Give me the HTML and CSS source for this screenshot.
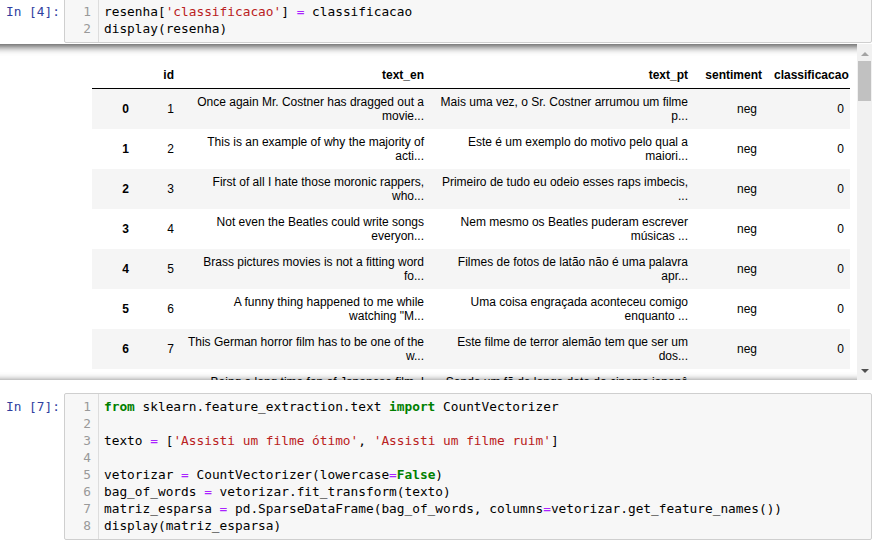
FILE: index.html
```html
<!DOCTYPE html>
<html>
<head>
<meta charset="utf-8">
<link rel="stylesheet" href="styles.css">
</head>
<body>
<div class="cell cell-top">
  <div class="prompt">In&nbsp;[4]:</div>
  <div class="input-area">
    <div class="gutter"><div class="ln">1</div><div class="ln">2</div></div>
    <div class="code">
      <div class="line">resenha[<span class="s">'classificacao'</span>] <span class="o">=</span> classificacao</div>
      <div class="line">display(resenha)</div>
    </div>
  </div>
</div>

<div class="output-scroll">
  <div class="output-content">
    <table class="df">
      <colgroup>
        <col class="c-idx"><col class="c-id"><col class="c-en"><col class="c-pt"><col class="c-sent"><col class="c-cls">
      </colgroup>
      <thead>
        <tr><th></th><th>id</th><th>text_en</th><th>text_pt</th><th>sentiment</th><th>classificacao</th></tr>
      </thead>
      <tbody>
        <tr><th>0</th><td>1</td><td>Once again Mr. Costner has dragged out a<br>movie...</td><td>Mais uma vez, o Sr. Costner arrumou um filme<br>p...</td><td class="sent">neg</td><td>0</td></tr>
        <tr><th>1</th><td>2</td><td>This is an example of why the majority of<br>acti...</td><td>Este é um exemplo do motivo pelo qual a<br>maiori...</td><td class="sent">neg</td><td>0</td></tr>
        <tr><th>2</th><td>3</td><td>First of all I hate those moronic rappers,<br>who...</td><td>Primeiro de tudo eu odeio esses raps imbecis,<br>...</td><td class="sent">neg</td><td>0</td></tr>
        <tr><th>3</th><td>4</td><td>Not even the Beatles could write songs<br>everyon...</td><td>Nem mesmo os Beatles puderam escrever<br>músicas ...</td><td class="sent">neg</td><td>0</td></tr>
        <tr><th>4</th><td>5</td><td>Brass pictures movies is not a fitting word<br>fo...</td><td>Filmes de fotos de latão não é uma palavra<br>apr...</td><td class="sent">neg</td><td>0</td></tr>
        <tr><th>5</th><td>6</td><td>A funny thing happened to me while<br>watching "M...</td><td>Uma coisa engraçada aconteceu comigo<br>enquanto ...</td><td class="sent">neg</td><td>0</td></tr>
        <tr><th>6</th><td>7</td><td>This German horror film has to be one of the<br>w...</td><td>Este filme de terror alemão tem que ser um<br>dos...</td><td class="sent">neg</td><td>0</td></tr>
        <tr><th>7</th><td>8</td><td>Being a long time fan of Japanese film, I<br>...</td><td>Sendo um fã de longa data do cinema japonê<br>s...</td><td class="sent">neg</td><td>0</td></tr>
      </tbody>
    </table>
  </div>
  <div class="scrollbar">
    <div class="sb-btn sb-up"></div>
    <div class="sb-thumb"></div>
    <div class="sb-space"></div>
    <div class="sb-btn sb-down"></div>
  </div>
</div>

<div class="cell cell-bottom">
  <div class="prompt">In&nbsp;[7]:</div>
  <div class="input-area">
    <div class="gutter">
      <div class="ln">1</div><div class="ln">2</div><div class="ln">3</div><div class="ln">4</div>
      <div class="ln">5</div><div class="ln">6</div><div class="ln">7</div><div class="ln">8</div>
    </div>
    <div class="code">
      <div class="line"><span class="k">from</span> sklearn.feature_extraction.text <span class="k">import</span> CountVectorizer</div>
      <div class="line"></div>
      <div class="line">texto <span class="o">=</span> [<span class="s">'Assisti um filme ótimo'</span>, <span class="s">'Assisti um filme ruim'</span>]</div>
      <div class="line"></div>
      <div class="line">vetorizar <span class="o">=</span> CountVectorizer(lowercase<span class="o">=</span><span class="k">False</span>)</div>
      <div class="line">bag_of_words <span class="o">=</span> vetorizar.fit_transform(texto)</div>
      <div class="line">matriz_esparsa <span class="o">=</span> pd.SparseDataFrame(bag_of_words, columns<span class="o">=</span>vetorizar.get_feature_names())</div>
      <div class="line">display(matriz_esparsa)</div>
    </div>
  </div>
</div>
</body>
</html>
```

FILE: styles.css
```css
* {
  box-sizing: border-box;
}

html,
body {
  margin: 0;
  padding: 0;
  background: #ffffff;
}

body {
  width: 877px;
  height: 544px;
  overflow: hidden;
  font-family: "Liberation Sans", Arial, sans-serif;
  color: #000000;
}

/* ---------- code cells ---------- */
.cell {
  display: flex;
  margin-right: 5px;
}

.cell-top {
  margin-top: -2px;
}

.cell-bottom {
  margin-top: 13px;
}

.prompt {
  flex: none;
  width: 64px;
  padding: 5px 0 0 6px;
  font-family: "DejaVu Sans Mono", "Liberation Mono", monospace;
  font-size: 12.8px;
  line-height: 17px;
  color: #303f9f;
  white-space: nowrap;
}

.input-area {
  flex: 1;
  display: flex;
  background: #f7f7f7;
  border: 1px solid #cfcfcf;
  border-radius: 2px;
  font-family: "DejaVu Sans Mono", "Liberation Mono", monospace;
  font-size: 12.8px;
  line-height: 17px;
}

.gutter {
  flex: none;
  width: 34px;
  padding: 4px 7px 5px 0;
  border-right: 1px solid #dddddd;
  text-align: right;
  color: #999999;
}

.ln {
  height: 17px;
}

.code {
  flex: 1;
  padding: 4px 0 5px 5px;
  color: #000000;
}

.line {
  height: 17px;
  white-space: pre;
}

.k {
  color: #008000;
  font-weight: bold;
}

.s {
  color: #ba2121;
}

.o {
  color: #aa22ff;
}

/* ---------- scrolled output ---------- */
.output-scroll {
  display: flex;
  height: 336px;
  margin: 1px 5px 0 -20px;
  border-radius: 2px;
  box-shadow: inset 0 2px 8px rgba(0, 0, 0, 0.8);
}

.output-content {
  flex: 1;
  overflow: hidden;
  padding: 18px 0 0 112px;
}

.df {
  table-layout: fixed;
  width: 758px;
  border-collapse: separate;
  border-spacing: 0;
  font-size: 12px;
  color: #000000;
}

.c-idx { width: 43px; }
.c-id { width: 45px; }
.c-en { width: 250px; }
.c-pt { width: 264px; }
.c-sent { width: 74px; }
.c-cls { width: 82px; }

.df th,
.df td {
  padding: 6px;
  text-align: right;
  vertical-align: middle;
  line-height: 14px;
  white-space: nowrap;
  overflow: hidden;
}

.df thead th {
  font-weight: bold;
  border-bottom: 1px solid #000000;
}

.df tbody th {
  font-weight: bold;
}

.df tbody tr:nth-child(odd) {
  background: #f5f5f5;
}

.df td.sent {
  padding-right: 11px;
}

/* ---------- scrollbar ---------- */
.scrollbar {
  flex: none;
  width: 15px;
  background: #f1f1f1;
  display: flex;
  flex-direction: column;
}

.sb-btn {
  flex: none;
  height: 15px;
  display: flex;
  justify-content: center;
  align-items: flex-start;
}

.sb-up {
  padding-top: 8px;
}

.sb-down {
  padding-top: 4px;
}

.sb-up::before {
  content: "";
  border-left: 4px solid transparent;
  border-right: 4px solid transparent;
  border-bottom: 4px solid #a3a3a3;
}

.sb-down::before {
  content: "";
  border-left: 4px solid transparent;
  border-right: 4px solid transparent;
  border-top: 4px solid #505050;
}

.sb-thumb {
  flex: none;
  height: 40px;
  margin: 2px 1px 0;
  background: #c1c1c1;
}

.sb-space {
  flex: 1;
}
```
